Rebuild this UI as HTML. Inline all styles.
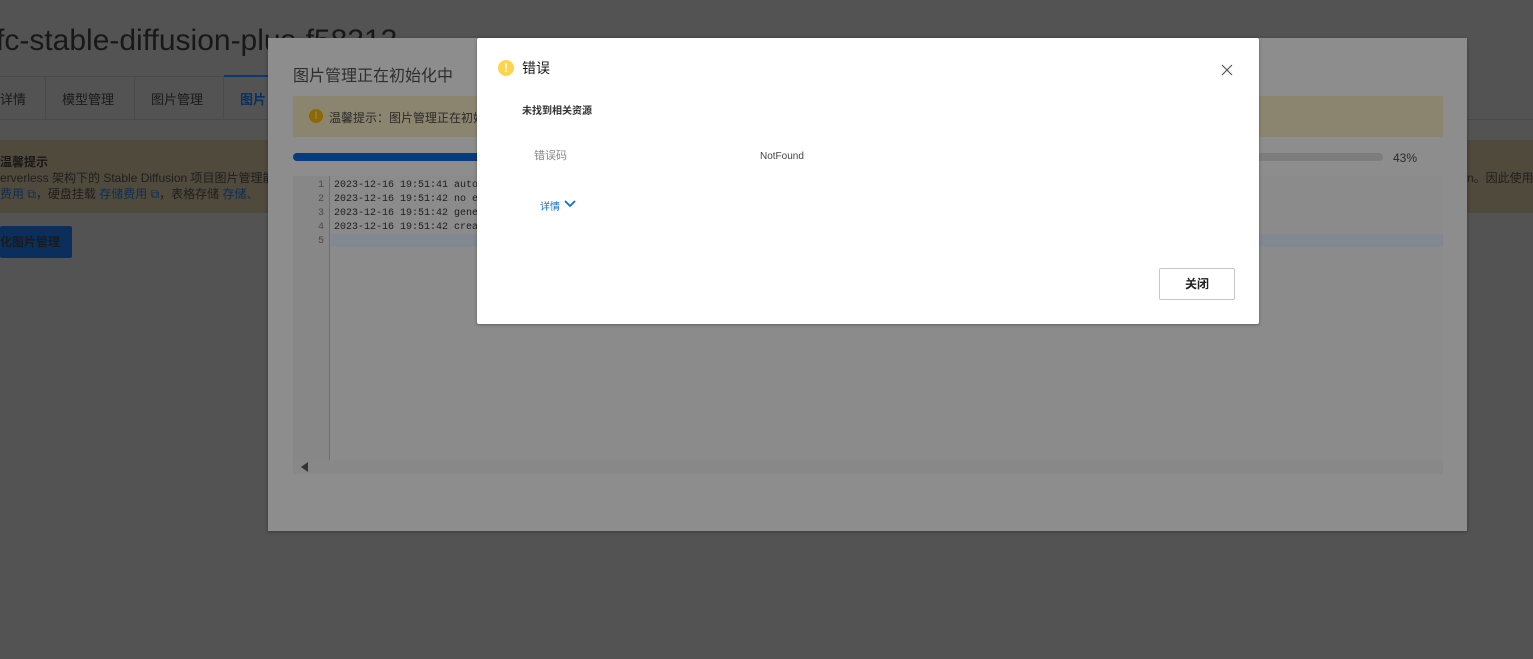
<!DOCTYPE html>
<html><head><meta charset="utf-8"><style>
*{margin:0;padding:0;box-sizing:border-box}
body{width:1533px;height:659px;background:#535353;font-family:"Liberation Sans","Noto Sans CJK SC",sans-serif;position:relative;overflow:hidden}
.a{position:absolute;white-space:nowrap}
.mono{font-family:"Liberation Mono","Noto Sans CJK SC",monospace;font-size:10px;color:#1e1e1e}
</style></head><body>
<div class="a" style="left:-4px;top:24px;font-size:30px;color:#181818">fc-stable-diffusion-plus-f58213</div>
<div class="a" style="left:0;top:76px;width:268px;height:44px;border-top:1px solid #4a4a4a;border-bottom:1px solid #4a4a4a"></div>
<div class="a" style="left:45px;top:76px;width:1px;height:44px;background:#4a4a4a"></div>
<div class="a" style="left:134px;top:76px;width:1px;height:44px;background:#4a4a4a"></div>
<div class="a" style="left:223px;top:76px;width:1px;height:44px;background:#4a4a4a"></div>
<div class="a" style="left:224px;top:75px;width:50px;height:2px;background:#0a3a70"></div>
<div class="a" style="left:0;top:89px;font-size:13px;color:#1a1a1a">详情</div>
<div class="a" style="left:62px;top:89px;font-size:13px;color:#1a1a1a">模型管理</div>
<div class="a" style="left:151px;top:89px;font-size:13px;color:#1a1a1a">图片管理</div>
<div class="a" style="left:240px;top:89px;font-size:13px;color:#0a3060;font-weight:bold">图片</div>
<div class="a" style="left:1467px;top:119px;width:66px;height:1px;background:#4a4a4a"></div>
<div class="a" style="left:0;top:140px;width:1533px;height:73px;background:#4f4a3c"></div>
<div class="a" style="left:0;top:153px;font-size:12px;color:#181818;font-weight:bold">温馨提示</div>
<div class="a" style="left:0;top:169px;font-size:12px;color:#1e1e1e">erverless 架构下的 Stable Diffusion 项目图片管理能</div>
<div class="a" style="left:0;top:185px;font-size:12px;color:#1e1e1e"><span style="color:#0c2e58">费用 ⧉</span>，硬盘挂载 <span style="color:#0c2e58">存储费用 ⧉</span>，表格存储 <span style="color:#0c2e58">存储、</span></div>
<div class="a" style="left:1467px;top:169px;font-size:12px;color:#1e1e1e">n。因此使用</div>
<div class="a" style="left:0;top:226px;width:72px;height:32px;background:#0b2f5c;border-radius:2px;color:#1b1b1b;font-size:12px;font-weight:bold;line-height:32px">化图片管理</div>

<div class="a" style="left:268px;top:38px;width:1199px;height:493px;background:#8d8d8d;box-shadow:0 1px 4px rgba(0,0,0,.3)"></div>
<div class="a" style="left:293px;top:62px;font-size:16px;color:#2e2e2e">图片管理正在初始化中</div>
<div class="a" style="left:293px;top:96px;width:1150px;height:41px;background:#8b8570;border-radius:2px"></div>
<div class="a" style="left:309px;top:109px;width:14px;height:14px;border-radius:50%;background:#8d6a00;color:#8b8570;font-size:11px;font-weight:bold;text-align:center;line-height:14px">!</div>
<div class="a" style="left:329px;top:109px;font-size:12px;color:#2a2a2a">温馨提示：图片管理正在初始</div>
<div class="a" style="left:293px;top:153px;width:1090px;height:8px;background:#7d7d7d;border-radius:4px"></div>
<div class="a" style="left:293px;top:153px;width:200px;height:8px;background:#073c7a;border-radius:4px 0 0 4px"></div>
<div class="a" style="left:1393px;top:151px;font-size:12px;color:#2a2a2a">43%</div>
<div class="a" style="left:293px;top:176px;width:1150px;height:298px;background:#8b8b8b"></div>
<div class="a" style="left:293px;top:176px;width:37px;height:284px;background:#878787;border-right:1px solid #6e6e6e"></div>
<div class="a" style="left:331px;top:234px;width:1112px;height:13px;background:#828892"></div>
<div class="a mono" style="left:318px;top:179px;line-height:14px;color:#4a4a4a;text-align:right">1<br>2<br>3<br>4<br>5</div>
<div class="a mono" style="left:334px;top:179px;line-height:14px">2023-12-16 19:51:41 auto<br>2023-12-16 19:51:42 no e<br>2023-12-16 19:51:42 gene<br>2023-12-16 19:51:42 crea</div>
<div class="a" style="left:293px;top:460px;width:1150px;height:14px;background:#888"></div>
<div class="a" style="left:301px;top:462px;width:0;height:0;border-top:5px solid transparent;border-bottom:5px solid transparent;border-right:7px solid #333"></div>

<div class="a" style="left:477px;top:38px;width:782px;height:286px;background:#fff;border-radius:2px;box-shadow:0 1px 3px rgba(0,0,0,.3)"></div>
<div class="a" style="left:498px;top:60px;width:16px;height:16px;border-radius:50%;background:#fcd54d;color:#fff;font-size:12px;font-weight:bold;text-align:center;line-height:16px">!</div>
<div class="a" style="left:522px;top:58px;font-size:14px;color:#1a1a1a">错误</div>
<svg class="a" style="left:1220px;top:63px" width="14" height="14"><path d="M2 2L12 12M12 2L2 12" stroke="#555" stroke-width="1.2"/></svg>
<div class="a" style="left:522px;top:102px;font-size:10px;color:#333;font-weight:bold">未找到相关资源</div>
<div class="a" style="left:534px;top:147px;font-size:11px;color:#888">错误码</div>
<div class="a" style="left:760px;top:151px;font-size:10px;color:#444">NotFound</div>
<div class="a" style="left:540px;top:198px;font-size:10px;color:#0b6fd0">详情</div>
<svg class="a" style="left:563px;top:199px" width="14" height="10"><path d="M2 2L7 7L12 2" stroke="#0b6fd0" stroke-width="1.8" fill="none"/></svg>
<div class="a" style="left:1159px;top:268px;width:76px;height:32px;border:1px solid #c4c6cc;border-radius:2px;font-size:12px;color:#222;text-align:center;line-height:30px;font-weight:bold">关闭</div>
</body></html>
